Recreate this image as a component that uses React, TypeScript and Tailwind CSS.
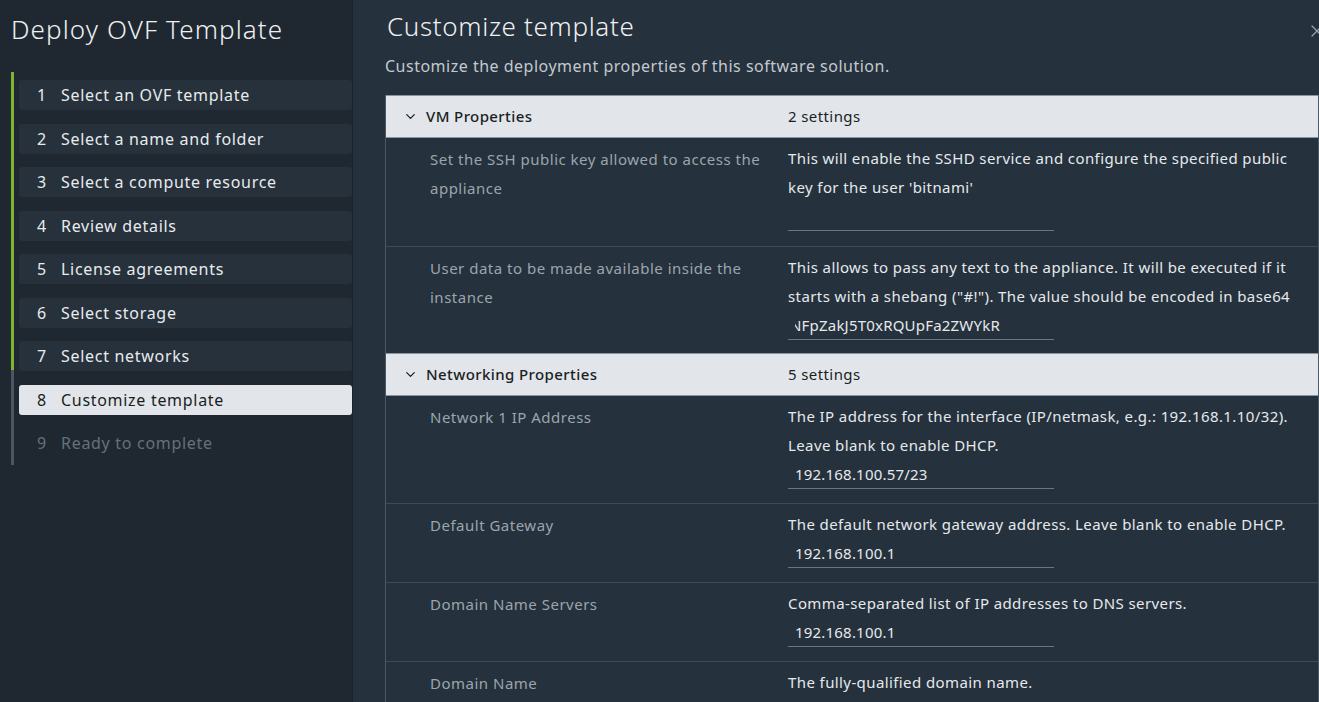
import { ChevronDown, X } from 'lucide-react';

const steps = [
    { n: 1, label: "Select an OVF template", state: "done" },
    { n: 2, label: "Select a name and folder", state: "done" },
    { n: 3, label: "Select a compute resource", state: "done" },
    { n: 4, label: "Review details", state: "done" },
    { n: 5, label: "License agreements", state: "done" },
    { n: 6, label: "Select storage", state: "done" },
    { n: 7, label: "Select networks", state: "done" },
    { n: 8, label: "Customize template", state: "active" },
    { n: 9, label: "Ready to complete", state: "todo" },
];

type Prop = {
    label: string[];
    desc: string[];
    value?: string;
    clipped?: boolean;
    h: string;
};

const groups: { title: string; count: string; props: Prop[] }[] = [
    {
        title: "VM Properties",
        count: "2 settings",
        props: [
            {
                label: ["Set the SSH public key allowed to access the", "appliance"],
                desc: ["This will enable the SSHD service and configure the specified public", "key for the user 'bitnami'"],
                value: "",
                h: "h-[108px]",
            },
            {
                label: ["User data to be made available inside the", "instance"],
                desc: ["This allows to pass any text to the appliance. It will be executed if it", "starts with a shebang (\"#!\"). The value should be encoded in base64"],
                value: "NFpZakJ5T0xRQUpFa2ZWYkR",
                clipped: true,
                h: "h-[107px]",
            },
        ],
    },
    {
        title: "Networking Properties",
        count: "5 settings",
        props: [
            {
                label: ["Network 1 IP Address"],
                desc: ["The IP address for the interface (IP/netmask, e.g.: 192.168.1.10/32).", "Leave blank to enable DHCP."],
                value: "192.168.100.57/23",
                h: "h-[107px]",
            },
            {
                label: ["Default Gateway"],
                desc: ["The default network gateway address. Leave blank to enable DHCP."],
                value: "192.168.100.1",
                h: "h-[79px]",
            },
            {
                label: ["Domain Name Servers"],
                desc: ["Comma-separated list of IP addresses to DNS servers."],
                value: "192.168.100.1",
                h: "h-[79px]",
            },
            {
                label: ["Domain Name"],
                desc: ["The fully-qualified domain name."],
                h: "h-[79px]",
            },
        ],
    },
];

const PropRow = ({ p, first }: { p: Prop; first: boolean }) => (
    <div className={`flex ${first ? "" : "border-t border-[#3f4b57]"} ${p.h}`}>
        <div className="w-[402px] shrink-0 pl-[44px] pt-[7px] text-[15px] tracking-[0.5px] leading-[29px] text-[#9ca5ae]">
            {p.label.map((l, i) => (
                <div key={i}>{l}</div>
            ))}
        </div>
        <div className="flex-1 pt-[6px] text-[15px] tracking-[0.4px] leading-[29px] text-[#e6e9ec]">
            {p.desc.map((l, i) => (
                <div key={i} className="whitespace-nowrap">{l}</div>
            ))}
            {p.value !== undefined && (
                <div className="w-[266px] h-[29px] border-b border-[#6b7580] pl-[7px] tracking-[0.2px]">
                    {p.clipped ? (
                        <div className="overflow-hidden whitespace-nowrap">
                            <span className="-ml-[5px] inline-block">{p.value}</span>
                        </div>
                    ) : (
                        p.value
                    )}
                </div>
            )}
        </div>
    </div>
);

export default function App() {
    return (
        <div
            className="flex w-[1319px] h-[702px] overflow-hidden bg-[#25313c]"
            style={{ fontFamily: '"Noto Sans", "Open Sans", sans-serif' }}
        >
            {/* Wizard sidebar */}
            <aside className="w-[353px] shrink-0 bg-[#1f2831] border-r border-[#1b232b]">
                <h1 className="pl-[11px] pt-[11px] text-[26px] leading-[36px] font-light text-[#eef0f2] tracking-[1.1px]">
                    Deploy OVF Template
                </h1>
                <div className="mt-[25px] ml-[11px] flex">
                    <div className="w-[3px] flex flex-col">
                        <div className="h-[298px] bg-[#7cb631]" />
                        <div className="h-[95px] bg-[#4b5661]" />
                    </div>
                    <ul className="flex-1 pt-[8px] pl-[5px] flex flex-col gap-[13.5px]">
                        {steps.map((s) => (
                            <li
                                key={s.n}
                                className={`h-[30px] flex items-center rounded-[3px] text-[16px] tracking-[0.7px] ${
                                    s.state === "active"
                                        ? "bg-[#e2e6eb] text-[#1a1e22]"
                                        : s.state === "done"
                                        ? "bg-[#26313b] text-[#e8ebee]"
                                        : "text-[#65707a]"
                                }`}
                            >
                                <span className="w-[42px] pl-[18px]">{s.n}</span>
                                <span>{s.label}</span>
                            </li>
                        ))}
                    </ul>
                </div>
            </aside>

            {/* Main content */}
            <main className="flex-1 pl-[32px] relative">
                <X className="absolute right-[-8px] top-[21px] text-[#9aa3ac]" size={20} strokeWidth={1.5} />
                <h2 className="pl-[2px] pt-[9px] text-[26px] leading-[34px] font-light tracking-[0.65px] text-[#eef0f2]">
                    Customize template
                </h2>
                <p className="mt-[13px] text-[16px] leading-[20px] tracking-[0.5px] text-[#c3c9cf]">
                    Customize the deployment properties of this software solution.
                </p>
                <div className="mt-[19px] border-l border-r border-[#4d5965]">
                    {groups.map((g) => (
                        <div key={g.title}>
                            <div className="h-[43px] flex items-center bg-[#e2e6eb] border-y border-[#8a949e] text-[15px] tracking-[0.4px] text-[#1b1f23] font-medium">
                                <div className="w-[402px] shrink-0 flex items-center pl-[17px]">
                                    <ChevronDown size={15} strokeWidth={2} className="mr-[8px]" />
                                    {g.title}
                                </div>
                                <div className="font-normal">{g.count}</div>
                            </div>
                            {g.props.map((p, i) => (
                                <PropRow key={i} p={p} first={i === 0} />
                            ))}
                        </div>
                    ))}
                </div>
            </main>
        </div>
    );
}
